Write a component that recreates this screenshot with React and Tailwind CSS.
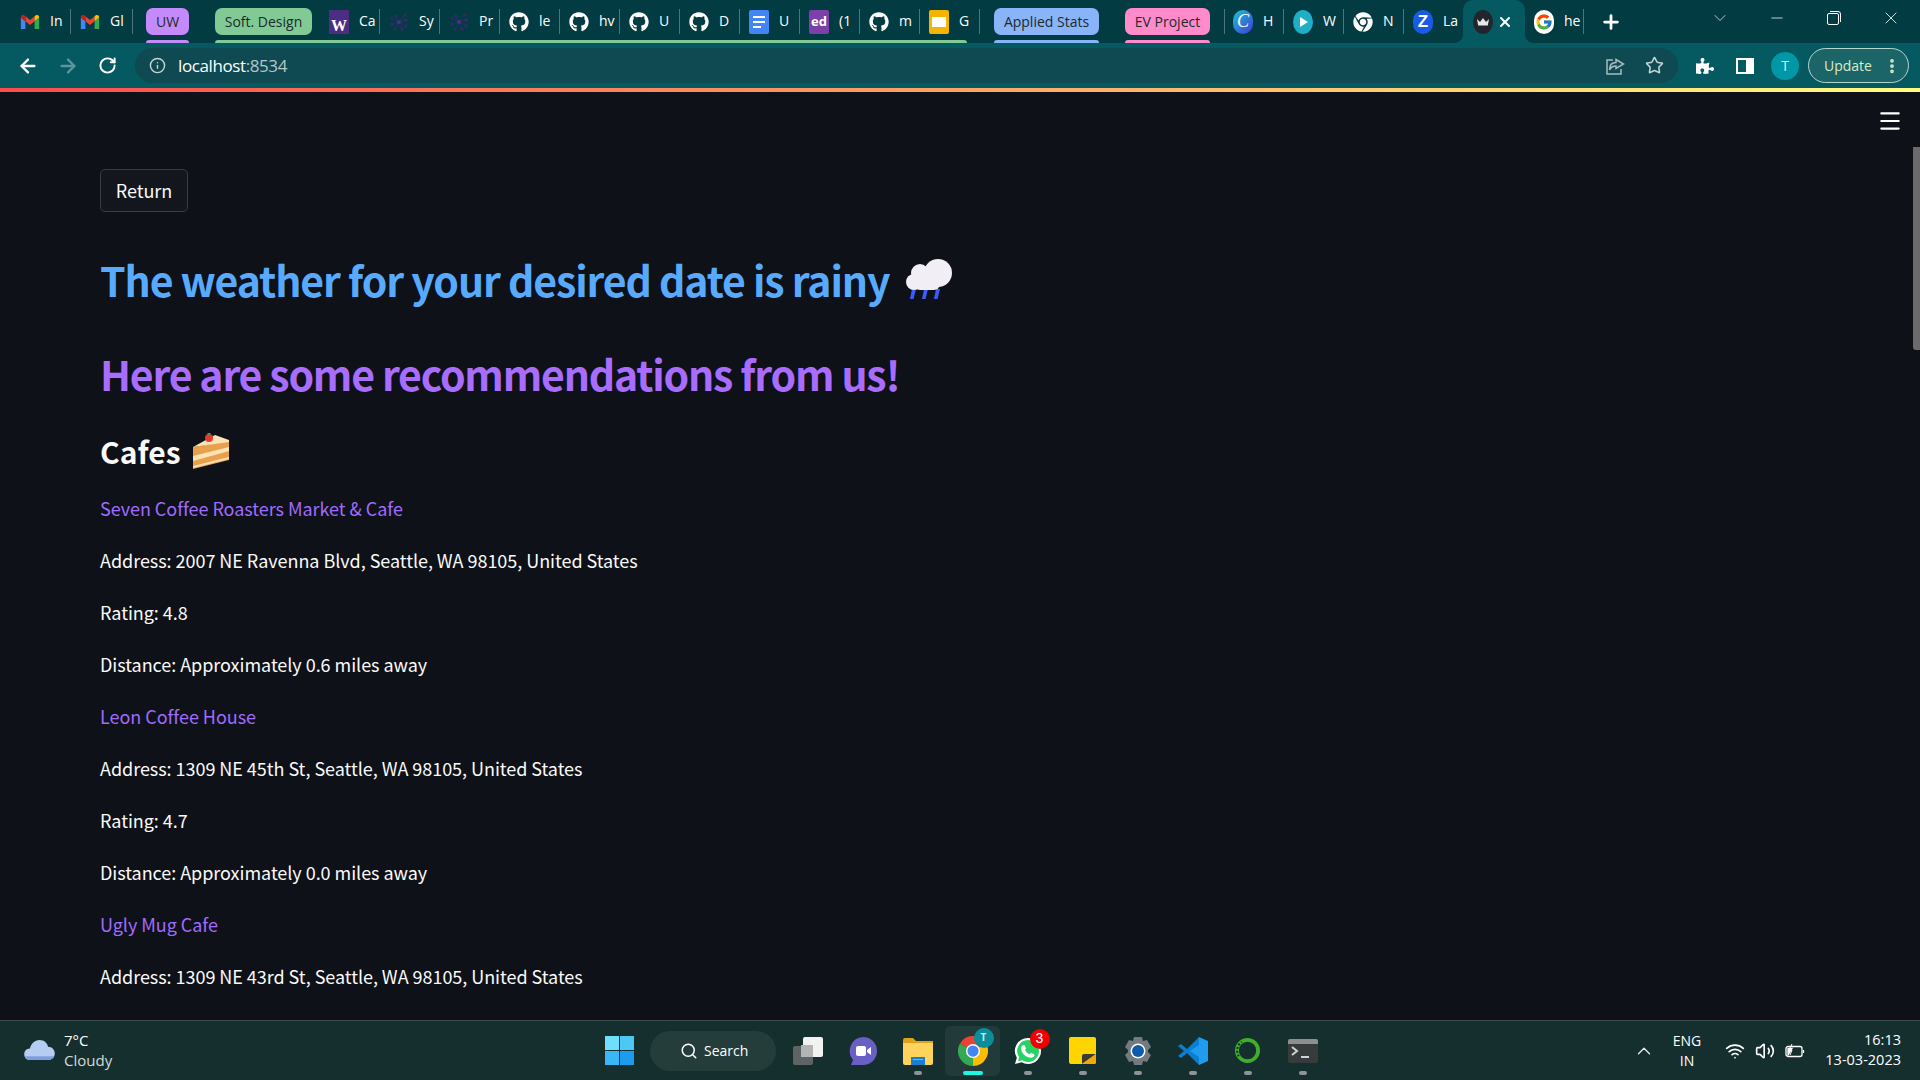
import { ArrowLeft, ArrowRight, RotateCw, Info, Star, Plus, Minus, ChevronDown, X, Menu, Search, ChevronUp, Wifi, Volume2, EllipsisVertical } from 'lucide-react';
import { FaGithub, FaChrome, FaPuzzlePiece } from 'react-icons/fa';
import { FcGoogle } from 'react-icons/fc';

const Gmail = () => (
    <svg viewBox="0 0 24 24" className="w-5 h-5">
        <path fill="#4285f4" d="M1 20.5V6.5l5.5 4.5v9.500H2.500A1.500 1.500 0 0 1 1 20.500z" />
        <path fill="#34a853" d="M23 20.500V6.500L17.500 11v9.500h4A1.500 1.500 0 0 0 23 20.500z" />
        <path fill="#ea4335" d="M6.500 11 12 15.500 17.500 11V5L12 9.500 6.500 5z" />
        <path fill="#c5221f" d="M6.500 5v6L1 6.500V6c0-2 2.400-3.200 4-2z" />
        <path fill="#fbbc04" d="M17.500 5v6L23 6.500V6c0-2-2.400-3.200-4-2z" />
    </svg>
);

const Uw = () => (
    <div className="w-5 h-6 -my-0.5 bg-[#4b2e83] flex items-end justify-center">
        <span className="text-white font-bold text-[16px] leading-[16px] font-['Liberation_Serif',serif]">W</span>
    </div>
);

const Spark = () => (
    <svg viewBox="0 0 20 20" className="w-5 h-5" stroke="#2f2d66" strokeWidth="0.8" fill="#2f2d66">
        <path d="M10 10 16 2M10 10 18 7M10 10 18 14M10 10 13 18M10 10 6 18M10 10 2 13M10 10 2 6M10 10 6 3" />
        <circle cx="10" cy="10" r="2" fill="#532a90" stroke="none" />
        <circle cx="16" cy="3" r="1.200" /><circle cx="17" cy="8" r="1.500" /><circle cx="17" cy="14" r="1.300" />
        <circle cx="13" cy="17" r="1.500" /><circle cx="6" cy="17" r="1.200" /><circle cx="3" cy="12" r="1.300" />
        <circle cx="3" cy="6" r="1" /><circle cx="7" cy="4" r="1.300" />
    </svg>
);

const Github = () => <FaGithub size={20} className="text-white" />;

const Docs = () => (
    <div className="w-5 h-6 rounded-[2px] bg-[#4285f4] flex flex-col justify-center gap-[3px] pl-1 -my-0.5">
        <div className="w-3 h-[2px] bg-white"></div>
        <div className="w-3 h-[2px] bg-white"></div>
        <div className="w-2 h-[2px] bg-white"></div>
    </div>
);

const Ed = () => (
    <div className="w-5 h-6 rounded-[2px] bg-[#7d3fa8] flex items-center justify-center text-white font-bold text-[13px] font-['Open_Sans',sans-serif] -my-0.5">ed</div>
);

const Slides = () => (
    <div className="w-5 h-6 rounded-[2px] bg-[#f4b400] flex items-center justify-center -my-0.5">
        <div className="w-[14px] h-[10px] bg-white"></div>
    </div>
);

const Canva = () => (
    <div className="w-5 h-6 -my-0.5 rounded-full bg-[linear-gradient(135deg,#1dc4d6,#3f3ad6)] flex items-center justify-center text-white italic text-[18px] font-['Liberation_Serif',serif]">C</div>
);

const Play = () => (
    <svg viewBox="0 0 20 24" className="w-5 h-6 -my-0.5">
        <ellipse cx="10" cy="12" rx="10" ry="12" fill="#1eaec6" />
        <path d="M7 7 15 12 7 17z" fill="#fff" />
    </svg>
);

const Zed = () => (
    <div className="w-5 h-6 -my-0.5 rounded-full bg-[#1a5be6] flex items-center justify-center text-white font-bold text-[17px] font-['Liberation_Sans',sans-serif]">Z</div>
);

const Crown = () => (
    <svg viewBox="0 0 20 24" className="w-5 h-6 -my-0.5">
        <ellipse cx="10" cy="12" rx="10" ry="12" fill="#23252e" />
        <path d="M4 9 7 12l3-4 3 4 3-3-1.200 6.500H5.200z" fill="#e8e8e8" />
    </svg>
);

const GoogleIcon = () => (
    <div className="w-5 h-6 -my-0.5 rounded-full bg-white flex items-center justify-center">
        <FcGoogle size={18} />
    </div>
);

const Tab = ({ icon, title, sep = true, width = 'w-[60px]' }) => (
    <div className={`${width} h-[43px] flex items-center shrink-0 pl-[9px] relative`}>
        {icon}
        <span className="ml-[10px] pb-[2px] whitespace-nowrap text-[14px] text-white">{title}</span>
        {sep && <div className="absolute right-0 top-[9px] w-px h-[25px] bg-[#4f7479]"></div>}
    </div>
);

const GroupPill = ({ label, bg, w }) => (
    <div className={`${w} ${bg} h-[27px] mt-2 pb-px rounded-[7px] flex items-center justify-center text-[14px] text-[#1c2a2c] shrink-0`}>{label}</div>
);

const TabStrip = () => (
    <div className="h-[43px] bg-[#033b42] flex items-start pl-[11px] font-['Open_Sans',sans-serif]">
        <Tab icon={<Gmail />} title="In" />
        <Tab icon={<Gmail />} title="Gl" width="w-[62px]" />
        <div className="relative ml-[13px] h-[43px] shrink-0">
            <GroupPill label="UW" bg="bg-[#c58af9]" w="w-[43px]" />
            <div className="absolute bottom-0 inset-x-0 h-[3px] rounded-t-[3px] bg-[#c58af9]"></div>
        </div>
        <div className="relative ml-[26px] h-[43px] flex shrink-0">
            <GroupPill label="Soft. Design" bg="bg-[#81c995]" w="w-[97px]" />
            <div className="w-[8px] shrink-0"></div>
            <Tab icon={<Uw />} title="Ca" />
            <Tab icon={<Spark />} title="Sy" />
            <Tab icon={<Spark />} title="Pr" />
            <Tab icon={<Github />} title="le" />
            <Tab icon={<Github />} title="hv" />
            <Tab icon={<Github />} title="U" />
            <Tab icon={<Github />} title="D" />
            <Tab icon={<Docs />} title="U" />
            <Tab icon={<Ed />} title="(1" />
            <Tab icon={<Github />} title="m" />
            <Tab icon={<Slides />} title="G" />
            <div className="absolute bottom-0 left-0 right-[13px] h-[3px] rounded-t-[3px] bg-[#81c995]"></div>
        </div>
        <div className="relative ml-[14px] h-[43px] shrink-0">
            <GroupPill label="Applied Stats" bg="bg-[#8ab4f8]" w="w-[105px]" />
            <div className="absolute bottom-0 inset-x-0 h-[3px] rounded-t-[3px] bg-[#8ab4f8]"></div>
        </div>
        <div className="relative ml-[26px] h-[43px] shrink-0">
            <GroupPill label="EV Project" bg="bg-[#ff8bcb]" w="w-[85px]" />
            <div className="absolute bottom-0 inset-x-0 h-[3px] rounded-t-[3px] bg-[#ff8bcb]"></div>
        </div>
        <div className="ml-[14px] w-px h-[25px] mt-[9px] -mr-px bg-[#4f7479]"></div>
        <Tab icon={<Canva />} title="H" />
        <Tab icon={<Play />} title="W" />
        <Tab icon={<FaChrome size={20} className="text-white" />} title="N" />
        <Tab icon={<Zed />} title="La" sep={false} width="w-[59px]" />
        {/* active tab */}
        <div className="w-[62px] h-[43px] bg-[#045a60] rounded-t-[10px] flex items-center pl-[10px] relative shrink-0">
            <span className="absolute -left-2 bottom-0 w-2 h-2 bg-[radial-gradient(circle_at_0_0,#033b42_7.500px,#045a60_8px)]"></span>
            <Crown />
            <X size={16} strokeWidth={3} className="text-white ml-[4px]" />
            <span className="absolute -right-2 bottom-0 w-2 h-2 bg-[radial-gradient(circle_at_100%_0,#033b42_7.500px,#045a60_8px)]"></span>
        </div>
        <Tab icon={<GoogleIcon />} title="he" width="w-[59px]" />
        <div className="ml-4 h-[43px] flex items-center">
            <Plus size={22} strokeWidth={3} className="text-white" />
        </div>
        <div className="ml-auto flex h-9 pr-px">
            <div className="w-[57px] flex items-center justify-center"><ChevronDown size={20} strokeWidth={1} className="text-[#d6e4e6]" /></div>
            <div className="w-[57px] flex items-center justify-center"><Minus size={18} strokeWidth={1} className="text-white" /></div>
            <div className="w-[57px] flex items-center justify-center">
                <svg viewBox="0 0 14 14" className="w-[14px] h-[14px]" fill="none" stroke="#fff" strokeWidth="1">
                    <rect x="0.500" y="2.500" width="11" height="11" rx="1.500" />
                    <path d="M3 0.500h8a2.500 2.500 0 0 1 2.500 2.500v8" />
                </svg>
            </div>
            <div className="w-[57px] flex items-center justify-center"><X size={20} strokeWidth={1} className="text-white" /></div>
        </div>
    </div>
);

const Toolbar = () => (
    <div className="h-[45px] bg-[#045a60] flex items-center pl-2">
        <div className="w-10 flex justify-center"><ArrowLeft size={22} strokeWidth={2.500} className="text-white" /></div>
        <div className="w-10 flex justify-center"><ArrowRight size={22} strokeWidth={2.500} className="text-[#5f9599]" /></div>
        <div className="w-10 flex justify-center pr-[2px]"><RotateCw size={19} strokeWidth={2.500} className="text-white" /></div>
        <div className="ml-[7px] flex-1 h-[35px] rounded-full bg-[#0f4a52] flex items-center pl-[14px] pr-[14px]">
            <Info size={17} strokeWidth={2} className="text-[#c6d3d5]" />
            <span className="ml-[12px] text-[17px] text-white font-['Open_Sans',sans-serif] tracking-[-0.4px]">localhost<span className="text-[#b4c6c9]">:8534</span></span>
            <svg viewBox="0 0 20 20" className="w-5 h-5 ml-auto" fill="none" stroke="#a9bcbf" strokeWidth="1.500">
                <path d="M8 4H2v14h14v-5" />
                <path d="M11 3.500 18.500 8 11 12.500V10c-3 0-5 1-6.500 4 0-5 2.500-7.500 6.500-7.500z" />
            </svg>
            <Star size={19} strokeWidth={2} className="text-[#c6d3d5] ml-[20px]" />
        </div>
        <div className="w-[242px] shrink-0 flex items-center pl-[7px]">
            <div className="w-10 flex justify-center"><FaPuzzlePiece size={18} className="text-white" /></div>
            <div className="w-10 flex justify-center">
                <svg viewBox="0 0 18 18" className="w-[18px] h-[18px]">
                    <path fill="#fff" fillRule="evenodd" d="M0 1h18v16H0zM2 3v12h8V3z" />
                </svg>
            </div>
            <div className="w-10 flex justify-center">
                <div className="w-7 h-7 rounded-full bg-[#0097a7] flex items-center justify-center text-[14px] text-[#dff3f5] font-['Open_Sans',sans-serif]">T</div>
            </div>
            <div className="ml-[3px] w-[101px] h-[35px] rounded-full border border-[#b5d6cf] bg-[#1b6467] flex items-center pl-[15px] text-[14px] text-[#d7ecc9] font-['Open_Sans',sans-serif]">
                Update
                <EllipsisVertical size={18} strokeWidth={3} className="text-[#d7ecc9] ml-[11px]" />
            </div>
        </div>
    </div>
);

const CloudRain = () => (
    <svg viewBox="0 0 46 40" className="w-[46px] h-10 inline-block shrink-0">
        <path fill="#3d5afe" d="M6 30h4l-2.500 10H4zM18 30h4l-2.500 10H16zM30 30h4l-2.500 10H28z" />
        <circle cx="32" cy="14" r="14" fill="#f1eef6" />
        <circle cx="14" cy="14" r="9" fill="#f1eef6" />
        <circle cx="8" cy="23" r="8" fill="#f1eef6" />
        <rect x="8" y="18" width="26" height="13" rx="6" fill="#f1eef6" />
    </svg>
);

const Cake = () => (
    <svg viewBox="0 0 36 36" className="w-9 h-9 inline-block shrink-0">
        <path fill="#e9a04d" d="M0 14 36 8v19L0 36z" />
        <path fill="#fbe3b5" d="M0 14 22 2l14 5v2z" />
        <path fill="#fbe3b5" d="M0 23 36 14v4L0 28zM0 33l36-9v2L0 35z" />
        <circle cx="16" cy="5" r="4" fill="#e53935" />
        <path d="M14 0h4l-2 3z" fill="#43a047" />
    </svg>
);

const places = [
    ['Seven Coffee Roasters Market & Cafe', '2007 NE Ravenna Blvd, Seattle, WA 98105, United States', '4.8', '0.6'],
    ['Leon Coffee House', '1309 NE 45th St, Seattle, WA 98105, United States', '4.7', '0.0'],
    ['Ugly Mug Cafe', '1309 NE 43rd St, Seattle, WA 98105, United States'],
];

const Content = () => (
    <main className="relative flex-1 min-h-0 overflow-hidden bg-[#0e1117] text-[#fafafa] font-['Noto_Sans_CJK_SC','Liberation_Sans',sans-serif] pl-[100px] pt-[77px]">
        <button className="h-[43px] w-[88px] pb-px rounded-[5px] border border-[#3b3d45] bg-[#13161d] text-[18px] leading-none">Return</button>
        <h1 className="mt-[35px] h-[64px] text-[41px] font-semibold leading-[64px] tracking-[-1.1px] text-[#58aaff] flex items-center gap-[17px]">
            The weather for your desired date is rainy <CloudRain />
        </h1>
        <h2 className="mt-[30px] h-[64px] text-[41px] font-semibold leading-[64px] tracking-[-1.2px] text-[#a86cff]">Here are some recommendations from us!</h2>
        <h3 className="mt-6 h-[44px] text-[30px] font-semibold leading-[44px] flex items-center gap-[12px]">Cafes <Cake /></h3>
        <div className="mt-[19px] tracking-[-0.04px]">
            {places.map((p) => (
                <div key={p[0]}>
                    <p className="text-[18px] leading-[32px] mb-5 text-[#a06bff]">{p[0]}</p>
                    <p className="text-[18px] leading-[32px] mb-5">Address: {p[1]}</p>
                    {p[2] && <p className="text-[18px] leading-[32px] mb-5">Rating: {p[2]}</p>}
                    {p[3] && <p className="text-[18px] leading-[32px] mb-5">Distance: Approximately {p[3]} miles away</p>}
                </div>
            ))}
        </div>
        <Menu size={26} strokeWidth={2} className="absolute right-[17px] top-[16px] text-white" />
        <div className="absolute right-0 top-[55px] w-[7px] h-[203px] rounded-bl-[3px] bg-[#6b6b6b]"></div>
    </main>
);

const TaskSlot = ({ children, running, active }) => (
    <div className={`w-[55px] h-[50px] relative flex items-center justify-center shrink-0 ${active ? 'rounded-[6px] bg-[#223b3a]' : ''}`}>
        {children}
        {running && <div className={`absolute bottom-[1px] left-1/2 -translate-x-1/2 h-[4px] rounded-full ${active ? 'w-5 bg-[#1ff5e3]' : 'w-2 bg-[#8b9594]'}`}></div>}
    </div>
);

const ChromeColor = () => (
    <svg viewBox="0 0 24 24" className="w-[30px] h-[30px]">
        <path fill="#ea4335" d="M12 12 1.600 6A12 12 0 0 1 22.400 6z" />
        <path fill="#34a853" d="M12 12 1.600 6A12 12 0 0 0 12 24z" />
        <path fill="#fbbc04" d="M12 12 12 24A12 12 0 0 0 22.400 6z" />
        <circle cx="12" cy="12" r="5.600" fill="#fff" />
        <circle cx="12" cy="12" r="4.500" fill="#4285f4" />
    </svg>
);

const Taskbar = () => (
    <footer className="h-[60px] shrink-0 bg-[#152f2e] border-t border-[#3c4b4a] flex items-center font-['Open_Sans',sans-serif] text-white">
        <svg viewBox="0 0 32 22" className="ml-6 w-[31px] h-[21px]">
            <path fill="#b6cdf2" d="M6 21C2 21 0 18 0 15s2-6 6-6c1-5 5-9 10-9s8 3 9 7c4 0 7 3 7 7s-3 7-7 7z" />
            <path fill="#7f9fdc" d="M6 21C3 21 1 19 .500 17h31C31 19 28 21 25 21z" />
        </svg>
        <div className="ml-[9px] w-[60px] text-[15px] leading-[20px] -mt-[2px]">
            <div>7°C</div>
            <div className="text-[#d4dbda]">Cloudy</div>
        </div>
        <div className="ml-[481px] w-[29px] h-[29px] grid grid-cols-2 grid-rows-2 gap-[1px] shrink-0">
            <div className="bg-[#6fe0fb]"></div><div className="bg-[#4cc8f7]"></div>
            <div className="bg-[#38b8f5]"></div><div className="bg-[#1a9cf0]"></div>
        </div>
        <div className="ml-4 w-[126px] h-10 rounded-full bg-[#243c3a] flex items-center pl-[30px] text-[14px] shrink-0">
            <Search size={18} strokeWidth={2} />
            <span className="ml-[6px]">Search</span>
        </div>
        <div className="ml-[4px] flex items-center">
            <TaskSlot>
                <div className="relative w-[30px] h-[28px]">
                    <div className="absolute left-0 bottom-0 w-5 h-[19px] rounded-[2px] bg-[#5e6463]"></div>
                    <div className="absolute right-0 top-0 w-5 h-[20px] rounded-[2px] bg-[#f2f2f2]"></div>
                    <div className="absolute left-[8px] top-[8px] w-[12px] h-[12px] bg-[#b3b5b5]"></div>
                </div>
            </TaskSlot>
            <TaskSlot>
                <svg viewBox="0 0 30 30" className="w-[30px] h-[30px]">
                    <path fill="#6a5fc4" d="M15 1a14 14 0 0 1 0 28H3l2-5A14 14 0 0 1 15 1z" />
                    <rect x="8" y="10" width="10" height="10" rx="2" fill="#fff" />
                    <path d="M19 14l4-3v8l-4-3z" fill="#fff" />
                </svg>
            </TaskSlot>
            <TaskSlot running>
                <svg viewBox="0 0 30 28" className="w-[30px] h-7">
                    <path fill="#e0a21a" d="M0 3a2 2 0 0 1 2-2h8l3 3h17v6H0z" />
                    <path fill="#ffd35c" d="M0 6h30v20a2 2 0 0 1-2 2H2a2 2 0 0 1-2-2z" />
                    <path fill="#1a7fd0" d="M8 20h14v8H8z" />
                    <path fill="#69b7f0" d="M10 22h10v1H10z" />
                </svg>
            </TaskSlot>
            <TaskSlot running active>
                <div className="relative"><ChromeColor />
                    <div className="absolute -right-[6px] -top-[8px] w-5 h-5 rounded-full bg-[#0b8d9c] flex items-center justify-center text-[10px] font-bold text-[#c4e9ec]">T</div>
                </div>
            </TaskSlot>
            <TaskSlot running>
                <div className="relative">
                    <svg viewBox="0 0 28 28" className="w-7 h-7">
                        <path fill="#fff" d="M14 1a13 13 0 0 1 0 26 13 13 0 0 1-6.500-1.700L1 27l1.800-6.300A13 13 0 0 1 14 1z" />
                        <path fill="#25d366" d="M14 3a11 11 0 0 1 0 22 11 11 0 0 1-5.800-1.700L4 24.500l1.200-4.200A11 11 0 0 1 14 3z" />
                        <path fill="#fff" d="M10 8c1 0 1.500 2.500 2 3.500L11 13c1 2 2.500 3.300 4.500 4.200l1.500-1.500c1 .5 3 1.300 3.500 2 0 2-2 3-3.500 3-5 0-10-5-10-9.500C7 9.500 8.500 8 10 8z" />
                    </svg>
                    <div className="absolute -right-[8px] -top-[8px] w-5 h-5 rounded-full bg-[#f10000] flex items-center justify-center text-[14px] text-white font-['Liberation_Sans',sans-serif]">3</div>
                </div>
            </TaskSlot>
            <TaskSlot running>
                <svg viewBox="0 0 27 27" className="w-[27px] h-[27px]">
                    <rect width="27" height="27" rx="2" fill="#ffd500" />
                    <path d="M13 27V19a2 2 0 0 1 2-2h12z" fill="#3d3a33" />
                    <path d="M13 27l14-10v8a2 2 0 0 1-2 2z" fill="#efa90a" />
                </svg>
            </TaskSlot>
            <TaskSlot running>
                <svg viewBox="0 0 30 30" className="w-[30px] h-[30px]">
                    <path fill="#737b80" d="M11 1h8l1 4 4-1 4 7-3 3v2l3 3-4 7-4-1-1 4h-8l-1-4-4 1-4-7 3-3v-2L2 11l4-7 4 1z" />
                    <circle cx="15" cy="15" r="7.500" fill="#fff" />
                    <circle cx="15" cy="15" r="6" fill="#0f5cad" />
                </svg>
            </TaskSlot>
            <TaskSlot running>
                <svg viewBox="0 0 30 30" className="w-[30px] h-[30px]">
                    <path fill="#0a7fd1" d="M21 1 9 13 3 8 0 10l6 5-6 5 3 2 6-5 12 12z" />
                    <path fill="#1f9cf0" d="M21 1l9 4v20l-9 4V9l-9 6 9 6z" />
                </svg>
            </TaskSlot>
            <TaskSlot running>
                <svg viewBox="0 0 28 28" className="w-[27px] h-[27px]" fill="none">
                    <circle cx="14" cy="14" r="11" stroke="#3fae2a" strokeWidth="4" />
                    <path d="M5 20A11 11 0 0 1 8 5" stroke="#0f2f20" strokeWidth="2" strokeDasharray="2 2" />
                </svg>
            </TaskSlot>
            <TaskSlot running>
                <div className="w-[30px] h-[24px] rounded-[2px] bg-[#363b3b] overflow-hidden relative">
                    <div className="h-[5px] bg-[#8d8f8f]"></div>
                    <svg viewBox="0 0 30 19" className="w-[30px] h-[19px]" fill="none" stroke="#cfd2d2" strokeWidth="2">
                        <path d="M4 3l5 4-5 4" /><path d="M13 13h8" />
                    </svg>
                </div>
            </TaskSlot>
        </div>
        <div className="ml-auto flex items-center pr-[19px]">
            <ChevronUp size={22} strokeWidth={1.500} className="text-[#e4e8e8]" />
            <div className="ml-[17px] w-[30px] text-center text-[14px] leading-[20px]"><div>ENG</div><div>IN</div></div>
            <Wifi size={20} className="ml-[23px]" />
            <Volume2 size={20} className="ml-[10px]" />
            <svg viewBox="0 0 20 14" className="w-5 h-[14px] ml-[10px]" fill="none" stroke="#fff" strokeWidth="1.300">
                <rect x="1" y="2.500" width="16" height="10" rx="2" />
                <path d="M18.500 6v3" />
                <path d="M3 11V4.500h4L3 11z" fill="#fff" />
                <path d="M7 0 4 6h3l-2 5" stroke="#fff" strokeWidth="1" />
            </svg>
            <div className="ml-[18px] -mt-px w-[78px] text-right text-[14.500px] leading-[20px]">
                <div>16:13</div>
                <div>13-03-2023</div>
            </div>
        </div>
    </footer>
);

export default function App() {
    return (
        <div className="h-screen flex flex-col overflow-hidden bg-[#0e1117]">
            <TabStrip />
            <Toolbar />
            <div className="h-[4px] shrink-0 bg-[linear-gradient(90deg,#ff4b4b,#fffd80)]"></div>
            <Content />
            <Taskbar />
        </div>
    );
}
